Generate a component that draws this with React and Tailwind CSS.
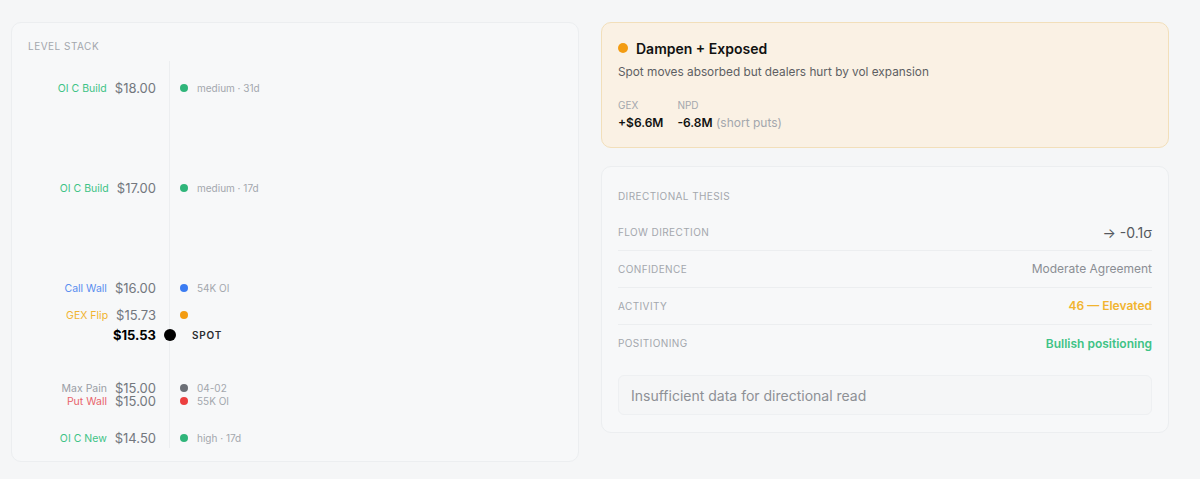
import React from "react";

// levels placed on a price axis: 100px per dollar
const LEVELS = [
  { label: "OI C Build", price: 18.0, note: "medium · 31d", tone: "green" },
  { label: "OI C Build", price: 17.0, note: "medium · 17d", tone: "green" },
  { label: "Call Wall", price: 16.0, note: "54K OI", tone: "blue" },
  { label: "GEX Flip", price: 15.73, note: "", tone: "amber" },
  { label: "Max Pain", price: 15.0, note: "04-02", tone: "gray" },
  { label: "Put Wall", price: 15.0, note: "55K OI", tone: "red", nudge: 13 },
  { label: "OI C New", price: 14.5, note: "high · 17d", tone: "green" },
];

const SPOT = 15.53;

const LABEL = {
  green: "text-[#3ec386]",
  blue: "text-[#5a8ef0]",
  amber: "text-[#f1b42f]",
  gray: "text-[#9a9ea5]",
  red: "text-[#e8646b]",
};

const DOT = {
  green: "bg-[#2fb57a]",
  blue: "bg-[#3b7cf2]",
  amber: "bg-[#f39c12]",
  gray: "bg-[#6b6f76]",
  red: "bg-[#ec3f3f]",
};

// row is 13px tall, centred on its price
const top = (price, nudge = 0) => 20.5 + (18 - price) * 100 + nudge;

function LevelStack() {
  return (
    <div className="rounded-[10px] border border-[#eceef0] bg-[#f7f8f9] px-4 pt-4 pb-[13px]">
      <div className="text-[10px] leading-[14px] tracking-[0.05em] text-[#a3a7ad]">LEVEL STACK</div>
      <div className="relative mt-2 h-[387px]">
        <div className="absolute left-[141px] top-0 h-full w-px bg-[#eceef0]" />
        {LEVELS.map((l, i) => (
          <div
            key={i}
            className="absolute left-0 flex h-[13px] items-center leading-[13px]"
            style={{ top: top(l.price, l.nudge) }}
          >
            <div className="flex w-[128px] items-center justify-end gap-2">
              <span className={`text-[10.5px] ${LABEL[l.tone]}`}>{l.label}</span>
              <span className="text-[13px] text-[#73777e]">${l.price.toFixed(2)}</span>
            </div>
            <span className={`ml-6 h-2 w-2 rounded-full ${DOT[l.tone]}`} />
            <span className="ml-[9px] text-[10px] text-[#a3a7ad]">{l.note}</span>
          </div>
        ))}
        <div className="absolute left-0 flex h-[13px] items-center leading-[13px]" style={{ top: top(SPOT) }}>
          <div className="flex w-[128px] justify-end">
            <span className="text-[13px] font-bold text-black">${SPOT.toFixed(2)}</span>
          </div>
          <span className="ml-[8px] h-[12px] w-[12px] rounded-full bg-black" />
          <span className="ml-[16px] text-[10px] font-semibold tracking-[0.08em] text-[#2b2d31]">SPOT</span>
        </div>
      </div>
    </div>
  );
}

function Regime() {
  return (
    <div className="h-[126px] rounded-[10px] border border-[#f2dfba] bg-[#faf1e4] px-4 pt-[15px]">
      <div className="flex h-5 items-center gap-2">
        <span className="h-[10px] w-[10px] rounded-full bg-[#f39c12]" />
        <span className="text-[14px] font-semibold text-[#111]">Dampen + Exposed</span>
      </div>
      <div className="mt-[6px] text-[11.8px] leading-4 text-[#5d5f63]">
        Spot moves absorbed but dealers hurt by vol expansion
      </div>
      <div className="mt-[18px] flex gap-[14px]">
        <div>
          <div className="text-[10px] leading-[14px] text-[#a3a7ad]">GEX</div>
          <div className="mt-[2px] text-[12px] font-semibold leading-[18px] text-[#111]">+$6.6M</div>
        </div>
        <div>
          <div className="text-[10px] leading-[14px] text-[#a3a7ad]">NPD</div>
          <div className="mt-[2px] text-[12px] leading-[18px]">
            <span className="font-semibold text-[#111]">-6.8M</span>{" "}
            <span className="text-[#a3a7ad]">(short puts)</span>
          </div>
        </div>
      </div>
    </div>
  );
}

const ROWS = [
  { k: "FLOW DIRECTION", v: "→ -0.1σ", cls: "text-[14px] text-[#55585e]" },
  { k: "CONFIDENCE", v: "Moderate Agreement", cls: "text-[12px] text-[#8b8e94]" },
  { k: "ACTIVITY", v: "46 — Elevated", cls: "text-[12px] font-semibold text-[#f1b42f]" },
  { k: "POSITIONING", v: "Bullish positioning", cls: "text-[12px] font-semibold text-[#3ec386]" },
];

function Thesis() {
  return (
    <div className="rounded-[10px] border border-[#eceef0] bg-[#f7f8f9] px-4 pt-[22px] pb-[17px]">
      <div className="text-[10px] leading-[14px] tracking-[0.04em] text-[#a3a7ad]">DIRECTIONAL THESIS</div>
      <div className="mt-[11px]">
        {ROWS.map((r, i) => (
          <div
            key={r.k}
            className={`flex h-[37px] items-center justify-between ${i < ROWS.length - 1 ? "border-b border-[#eceef0]" : ""}`}
          >
            <span className="text-[10px] tracking-[0.04em] text-[#a3a7ad]">{r.k}</span>
            <span className={r.cls}>{r.v}</span>
          </div>
        ))}
      </div>
      <div className="mt-[13px] flex h-[40px] items-center rounded-[6px] border border-[#eef0f2] bg-[#f5f6f7] px-[12px]">
        <span className="text-[14px] text-[#8d9095]">Insufficient data for directional read</span>
      </div>
    </div>
  );
}

export default function App() {
  return (
    <div
      className="min-h-screen bg-[#f5f6f7] pl-[11px] pr-[31px] pt-[22px]"
      style={{ fontFamily: "Inter, 'Liberation Sans', sans-serif" }}
    >
      <div className="grid grid-cols-2 items-start gap-[22px]">
        <LevelStack />
        <div className="flex flex-col gap-[18px]">
          <Regime />
          <Thesis />
        </div>
      </div>
    </div>
  );
}
